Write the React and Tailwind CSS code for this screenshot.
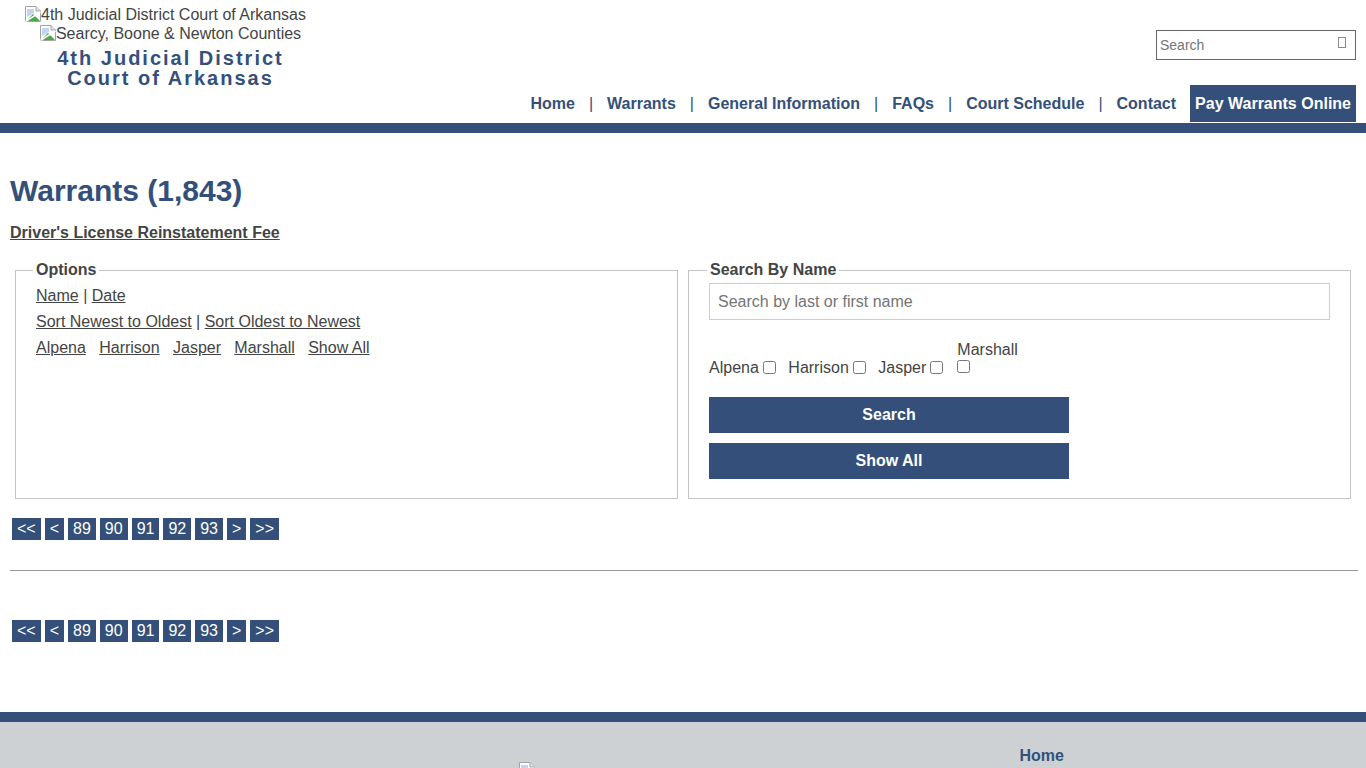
import React from "react";

const navLinks = ["Home", "Warrants", "General Information", "FAQs", "Court Schedule", "Contact"];
const pages = ["<<", "<", "89", "90", "91", "92", "93", ">", ">>"];
const cityLinks = ["Alpena", "Harrison", "Jasper", "Marshall", "Show All"];
const cityChecks = ["Alpena", "Harrison", "Jasper"];

const BrokenImage = () => (
  <svg width="16" height="16" viewBox="0 0 16 16" className="inline-block shrink-0 align-[-2px]">
    <path d="M0.5 0.5H11L15.5 5V15.5H0.5Z" fill="#fff" stroke="#a3a3a3" />
    <path d="M11 0.5V5H15.5" fill="#e5e5e5" stroke="#a3a3a3" />
    <path d="M2 3H9V7L2 11Z" fill="#c3d4f0" />
    <path d="M1 15L8 8L15 15Z" fill="#4ca64c" />
    <path d="M15.5 6L0.5 15.5" stroke="#fff" strokeWidth="1.5" />
  </svg>
);

const Pagination = () => (
  <div className="flex gap-1 pl-[2px] text-base leading-[22px] text-white">
    {pages.map((page) => (
      <a key={page} className="bg-[#34507a] px-[5px] h-[22px]">
        {page}
      </a>
    ))}
  </div>
);

export default function App() {
  return (
    <div className="h-[768px] overflow-hidden bg-white font-['Liberation_Sans',Arial,sans-serif] text-base text-[#444]">
      <header className="flex h-[133px] justify-between border-b-[10px] border-[#34507a]">
        <div className="w-[341px] pt-[5px] text-center">
          <div className="h-[19px] pr-[10px] leading-[19px]">
            <BrokenImage />4th Judicial District Court of Arkansas
          </div>
          <div className="h-[19px] leading-[19px]">
            <BrokenImage />Searcy, Boone &amp; Newton Counties
          </div>
          <div className="mt-[5px] text-xl leading-[20px] font-bold tracking-[2px] text-[#34507a]">
            4th Judicial District
            <br />
            Court of Arkansas
          </div>
        </div>
        <div className="flex flex-col items-end pr-[10px]">
          <div className="mt-[30px] flex h-[30px] w-[200px] items-center border border-[#666] pl-[3px] pr-[9px]">
            <span className="flex-1 text-sm text-[#757575]">Search</span>
            <span className="mb-[6px] h-[11px] w-[8px] border border-[#888]" />
          </div>
          <nav className="mt-[25px] flex h-[37px] items-center font-bold text-[#34507a]">
            {navLinks.map((link, i) => (
              <React.Fragment key={link}>
                {i > 0 && <span className="px-[14px] font-normal">|</span>}
                <a>{link}</a>
              </React.Fragment>
            ))}
            <a className="ml-[14px] flex h-[37px] items-center bg-[#34507a] px-[5px] text-white">
              Pay Warrants Online
            </a>
          </nav>
        </div>
      </header>

      <main className="h-[579px] px-[10px] pt-[41px]">
        <h1 className="text-[30px] leading-[34px] font-bold text-[#34507a]">Warrants (1,843)</h1>
        <a className="mt-[16px] block leading-[18px] font-bold underline">Driver's License Reinstatement Fee</a>

        <div className="mt-[19px] flex gap-[10px] pl-[5px] pr-[5px]">
          <fieldset className="h-[238px] w-[663px] border border-[#c4c4c4] px-5">
            <legend className="-ml-[3px] px-[3px] leading-[18px] font-bold">Options</legend>
            <div className="mt-[8px] flex flex-col gap-2 leading-[18px]">
              <div>
                <a className="underline">Name</a> | <a className="underline">Date</a>
              </div>
              <div>
                <a className="underline">Sort Newest to Oldest</a> | <a className="underline">Sort Oldest to Newest</a>
              </div>
              <div className="flex gap-[13.35px]">
                {cityLinks.map((city) => (
                  <a key={city} className="underline">
                    {city}
                  </a>
                ))}
              </div>
            </div>
          </fieldset>

          <fieldset className="h-[238px] w-[663px] border border-[#c4c4c4] px-5">
            <legend className="-ml-[2px] px-[3px] leading-[18px] font-bold">Search By Name</legend>
            <input
              type="text"
              placeholder="Search by last or first name"
              className="mt-[4px] block h-[37px] w-[621px] border border-[#ccc] px-2 placeholder:text-[#757575]"
            />
            <div className="mt-[20px] flex h-[37px] items-end gap-[12.5px]">
              {cityChecks.map((city) => (
                <label key={city} className="flex items-center leading-[19px]">
                  {city}
                  <input type="checkbox" className="ml-[4px] mt-[-1px] size-[13px]" />
                </label>
              ))}
              <label className="ml-[1.5px] flex flex-col leading-[18px]">
                Marshall
                <input type="checkbox" className="mt-[1px] mb-[4px] size-[13px]" />
              </label>
            </div>
            <button className="mt-[20px] block h-9 w-[360px] bg-[#34507a] font-bold text-white">Search</button>
            <button className="mt-[10px] block h-9 w-[360px] bg-[#34507a] font-bold text-white">Show All</button>
          </fieldset>
        </div>

        <div className="mt-[19px]">
          <Pagination />
        </div>
        <hr className="-mr-[2px] mt-[30px] border-t border-[#999]" />
        <div className="mt-[49px]">
          <Pagination />
        </div>
      </main>

      <footer className="flex h-[56px] overflow-hidden border-t-[10px] border-[#34507a] bg-[#cdd1d4]">
        <div className="ml-[519px] flex pt-[40px]">
          <BrokenImage />
        </div>
        <a className="ml-[484.5px] pt-[25px] leading-[18px] font-bold text-[#34507a]">Home</a>
      </footer>
    </div>
  );
}
